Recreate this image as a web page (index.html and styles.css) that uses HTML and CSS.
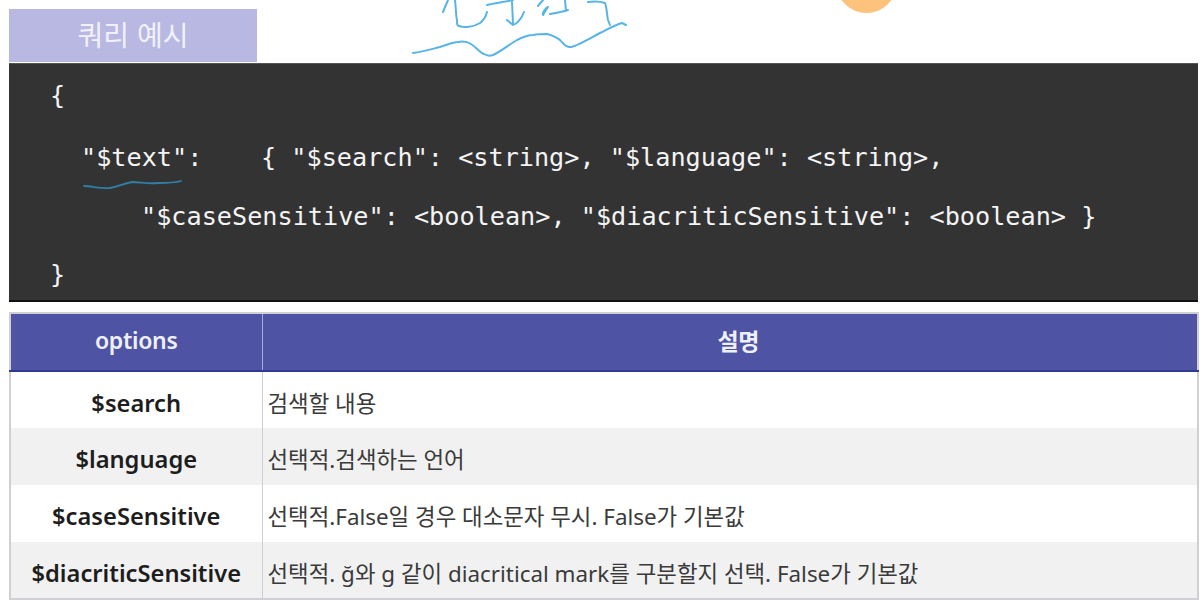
FILE: index.html
```html
<!DOCTYPE html>
<html lang="ko">
<head>
<meta charset="utf-8">
<title>쿼리 예시</title>
<link rel="stylesheet" href="styles.css">
</head>
<body>
<main class="slide">
  <div class="tab">쿼리 예시</div>
  <pre class="code"><code class="l0">{</code><code class="l1">"$text":<span class="gap">    </span>{ "$search": &lt;string&gt;, "$language": &lt;string&gt;,</code><code class="l2">"$caseSensitive": &lt;boolean&gt;, "$diacriticSensitive": &lt;boolean&gt; }</code><code class="l0 last">}</code></pre>
  <table class="opts">
    <thead><tr><th class="c1">options</th><th class="c2">설명</th></tr></thead>
    <tbody>
      <tr><th>$search</th><td>검색할 내용</td></tr>
      <tr><th>$language</th><td>선택적.검색하는 언어</td></tr>
      <tr><th>$caseSensitive</th><td>선택적.False일 경우 대소문자 무시. False가 기본값</td></tr>
      <tr><th>$diacriticSensitive</th><td>선택적. ğ와 g 같이 diacritical mark를 구분할지 선택. False가 기본값</td></tr>
    </tbody>
  </table>
  <div class="sun"></div>
  <svg class="ink" width="1202" height="607" viewBox="0 0 1202 607" fill="none">
    <g class="ink-light">
      <path d="M443 12 L448 0"/>
      <path d="M455 0 C456 8 456 18 457 20 C457 24 457 26 459 26 C464 28 474 27 480 23 C484 20 486 16 487 12"/>
      <path d="M487 5 C495 3 505 2 513 0"/>
      <path d="M512 2 L513 23 M507 20 L513 25 C517 24 522 18 524 12"/>
      <path d="M538 6 L543 0 M548 7 C546 10 544 13 543 15 C542 12 546 8 548 7 M550 14 C556 13 562 12 568 10 M565 0 L566 11"/>
      <path d="M588 2 C595 1 602 2 605 3 C607 8 607 16 608 20 L610 25"/>
      <path d="M413 53 C422 52 432 49 440 47 C447 45 453 42 458 42 C463 41 468 42 471 44 C476 47 480 53 484 54 C487 56 490 56 493 55 C500 52 510 44 517 40 C523 37 528 35 533 35 C538 34 543 34 547 34 C553 35 557 38 560 40 C563 43 565 47 570 47 C575 47 585 41 600 33 C608 29 615 25 622 23 L626 25"/>
    </g>
    <path class="ink-dark" d="M84 186 C92 186 100 189 110 188 C120 186 125 183 132 182 C140 182 148 184 158 183 C166 183 174 183 181 181"/>
  </svg>
</main>
</body>
</html>
```

FILE: styles.css
```css
html, body {
  margin: 0;
  padding: 0;
  background: #fff;
}
.slide {
  position: relative;
  width: 1202px;
  height: 607px;
  overflow: hidden;
  padding: 9px 3px 0 9px;
  box-sizing: border-box;
  font-family: "Noto Sans", "Noto Sans CJK KR", sans-serif;
}
.tab {
  width: 248px;
  height: 53px;
  background: #b9b8e3;
  color: #f1f1fb;
  font-family: "Noto Sans CJK KR", sans-serif;
  font-size: 28px;
  font-weight: 400;
  line-height: 50px;
  text-align: center;
}
.code {
  margin: 1px 0 0;
  width: 1189px;
  height: 239px;
  box-sizing: border-box;
  background: #333333;
  border-top: 1px solid #555;
  border-bottom: 2px solid #111;
  color: #f4f4f4;
  font-family: "DejaVu Sans Mono", monospace;
  font-size: 25.2px;
  padding-top: 2px;
  overflow: hidden;
}
.code code {
  display: block;
  height: 59px;
  font: inherit;
  line-height: 59px;
  white-space: pre;
}
.l0 { padding-left: 41px; }
.l1 { padding-left: 72px; margin-top: 3px; }
.l2 { padding-left: 132px; }
.code .last { margin-top: -1px; }
.gap { letter-spacing: -0.5px; }
.opts {
  margin-top: 10px;
  width: 1190px;
  border-collapse: collapse;
  table-layout: fixed;
  border: 2px solid #cfcfd4;
  color: #222;
}
.opts .c1 { width: 252px; }
.opts .c2 { padding-left: 18px; }
.opts thead th {
  box-sizing: border-box;
  height: 58px;
  background: #4e53a3;
  color: #eef0f8;
  font-size: 23px;
  font-weight: 600;
  letter-spacing: -0.3px;
  border-right: 1px solid #a7aad2;
  border-bottom: 2px solid #2f3a94;
  padding-bottom: 4px;
  padding-top: 0;
}
.opts tbody th, .opts td {
  box-sizing: border-box;
  height: 57px;
  padding: 4px 0 0;
}
.opts tbody th {
  padding-top: 5px;
  font-size: 23.7px;
  font-weight: 600;
  text-align: center;
  color: #1d1d1d;
  border-right: 1px solid #cfcfcf;
}
.opts td {
  padding-left: 5px;
  color: #3a3a3a;
  font-size: 22.4px;
  font-weight: 400;
  white-space: nowrap;
}
.opts tbody tr:nth-child(even) { background: #f1f1f1; }
.sun {
  position: absolute;
  left: 836px;
  top: -48px;
  width: 61px;
  height: 61px;
  border-radius: 50%;
  background: #fdc27c;
}
.ink {
  position: absolute;
  left: 0;
  top: 0;
  pointer-events: none;
}
.ink-light path {
  stroke: #58b4e6;
  stroke-width: 2;
  stroke-linecap: round;
  stroke-linejoin: round;
}
.ink-dark {
  stroke: #2f7fa6;
  stroke-width: 1.8;
  stroke-linecap: round;
}
```
